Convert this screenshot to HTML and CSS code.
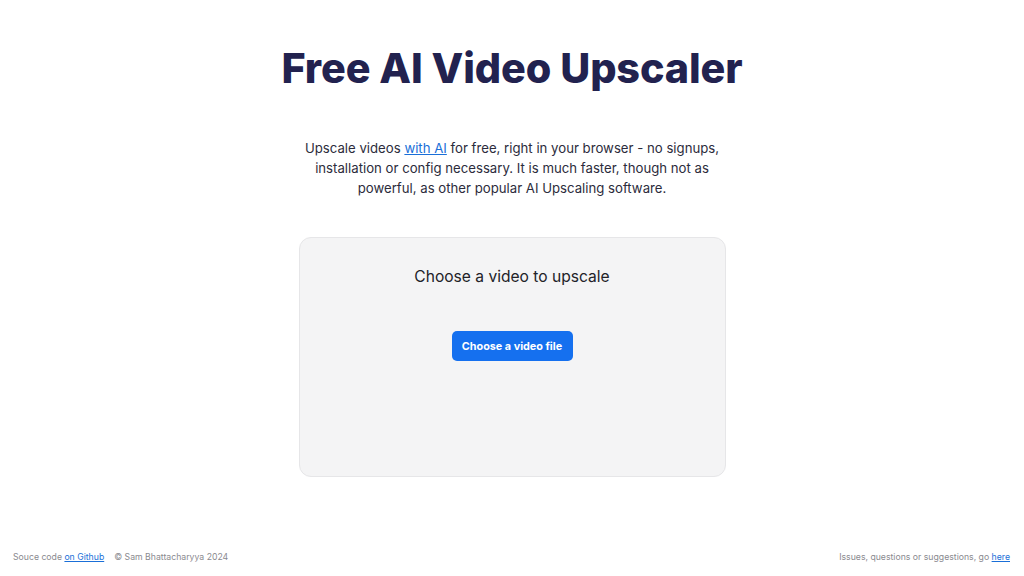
FILE: index.html
```html
<!DOCTYPE html>
<html lang="en">
<head>
<meta charset="utf-8">
<title>Free AI Video Upscaler</title>
<link rel="stylesheet" href="styles.css">
</head>
<body>
<div class="page">
  <main class="main">
    <h1 class="title">Free AI Video Upscaler</h1>
    <p class="intro">Upscale videos <a href="#" class="link">with AI</a> for free, right in your browser - no signups, installation or config necessary. It is much faster, though not as powerful, as other popular AI Upscaling software.</p>
    <section class="card">
      <h2 class="card-title">Choose a video to upscale</h2>
      <button class="btn">Choose a video file</button>
    </section>
  </main>
  <footer class="footer">
    <div class="footer-left">
      <span>Souce code <a href="#" class="link">on Github</a></span>
      <span>© Sam Bhattacharyya 2024</span>
    </div>
    <div class="footer-right">Issues, questions or suggestions, go <a href="#" class="link">here</a></div>
  </footer>
</div>
</body>
</html>
```
FILE: styles.css
```css
* { box-sizing: border-box; }
html, body { margin: 0; padding: 0; background: #ffffff; }
body {
  font-family: Inter, "Noto Sans", "Liberation Sans", sans-serif;
  color: #2b2b3a;
}
.page {
  width: 1024px;
  height: 576px;
  display: flex;
  flex-direction: column;
}
.main {
  flex: 1;
  display: flex;
  flex-direction: column;
  align-items: center;
}
.title {
  margin: 40px 0 0;
  font-size: 41.3px;
  line-height: 56px;
  font-weight: 800;
  color: #22224f;
  letter-spacing: -0.1px;
}
.intro {
  margin: 42px 0 0;
  width: 420px;
  text-align: center;
  font-size: 13.2px;
  line-height: 20px;
  color: #2c2c3c;
}
.link { color: #1a6fd8; text-decoration: underline; }
.card {
  margin-top: 39px;
  width: 427px;
  height: 240px;
  background: #f4f4f5;
  border: 1px solid #e6e6e8;
  border-radius: 12px;
  display: flex;
  flex-direction: column;
  align-items: center;
  padding-top: 28px;
}
.card-title {
  margin: 0;
  font-size: 15.6px;
  line-height: 22px;
  font-weight: 400;
  color: #222228;
}
.btn {
  margin-top: 43px;
  width: 121px;
  height: 30px;
  border: none;
  border-radius: 5px;
  background: #1570ef;
  color: #ffffff;
  font-family: inherit;
  font-size: 10.8px;
  font-weight: 700;
  cursor: pointer;
}
.footer {
  display: flex;
  justify-content: space-between;
  align-items: center;
  padding: 0 14px 14px 13px;
  font-size: 8.7px;
  color: #8a8a8f;
}
.footer-left { display: flex; gap: 10px; }
```
